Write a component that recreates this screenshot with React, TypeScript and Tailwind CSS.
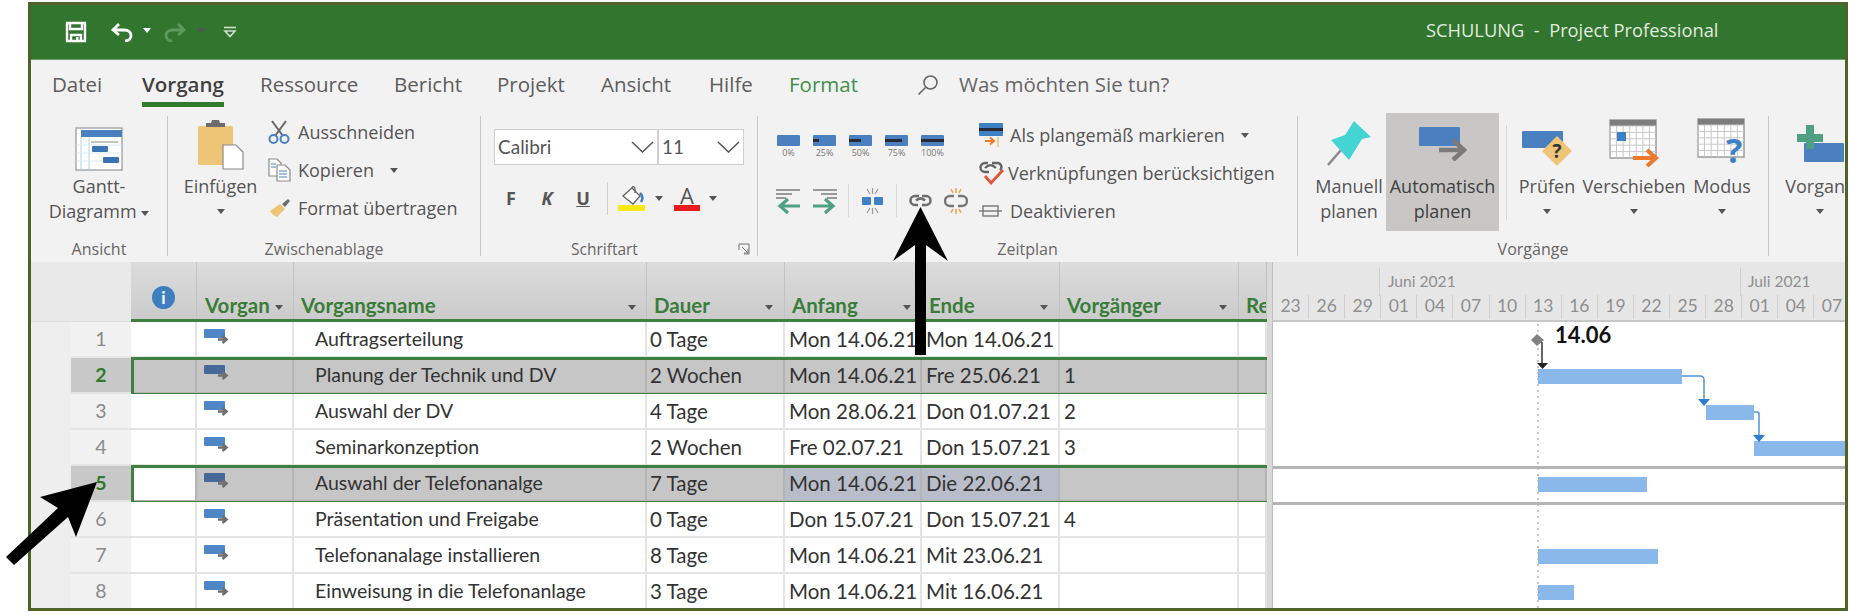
const Caret = ({ className = "" }: { className?: string }) => (
  <span className={`inline-block w-0 h-0 border-l-[4px] border-r-[4px] border-t-[5px] border-l-transparent border-r-transparent border-t-[#555] ${className}`} />
);

const GridCal = ({ rows = 4, cols = 6 }: { rows?: number; cols?: number }) => (
  <>
    <rect x="1" y="1" width="46" height="38" fill="#fff" stroke="#9a9a9a" strokeWidth="1.5" />
    <rect x="1" y="1" width="46" height="6" fill="#7d7d7d" />
    {Array.from({ length: cols }).map((_, i) => (
      <line key={`c${i}`} x1={1 + (i * 46) / cols} y1="7" x2={1 + (i * 46) / cols} y2="39" stroke="#c8c8c8" />
    ))}
    {Array.from({ length: rows }).map((_, i) => (
      <line key={`r${i}`} x1="1" y1={7 + (i * 32) / rows} x2="47" y2={7 + (i * 32) / rows} stroke="#c8c8c8" />
    ))}
  </>
);

const RowIcon = ({ dark }: { dark?: boolean }) => (
  <svg width="25" height="17" viewBox="0 0 25 17">
    <rect x="0" y="0" width="21" height="9" rx="1" fill={dark ? "#46699a" : "#4f86c6"} />
    <path d="M14 10.500H21M18.500 7L22.500 10.500L18.500 14" fill="none" stroke="#6f6f6f" strokeWidth="2.600" />
  </svg>
);

const Link = ({ color = "#6d6d6d" }: { color?: string }) => (
  <svg width="25" height="13" viewBox="0 0 25 13" fill="none" stroke={color} strokeWidth="2.600">
    <path d="M11 2H7a4.500 4.500 0 0 0 0 9h3" />
    <path d="M14 2h4a4.500 4.500 0 0 1 0 9h-4" />
    <path d="M8 6.500C11 3.500 14 3.500 17 6.500" />
  </svg>
);

const Percent = ({ fill, label }: { fill: number; label: string }) => (
  <div className="flex flex-col items-center w-[23px]">
    <div className="w-[23px] h-[11px] bg-[#4a80bf] rounded-[1px] flex items-center">
      {fill > 0 && <div className="h-[3px] bg-[#2a2a35]" style={{ width: `${fill}%` }} />}
    </div>
    <span className="text-[9px] leading-[12px] mt-[1px] text-[#777] whitespace-nowrap">{label}</span>
  </div>
);

const LargeButton = ({ icon, lines, caret, className = "" }: { icon: React.ReactNode; lines: string[]; caret?: boolean; className?: string }) => (
  <div className={`flex flex-col items-center shrink-0 ${className}`}>
    <div className="h-[55px] flex items-center justify-center">{icon}</div>
    <div className="mt-[3px] text-center leading-[25px] whitespace-nowrap">
      {lines.map((l) => (
        <div key={l}>{l}</div>
      ))}
      {caret && <div className="h-[25px] flex items-center justify-center"><Caret /></div>}
    </div>
  </div>
);

const SmallButton = ({ icon, label, caret, slot = "w-[30px]" }: { icon: React.ReactNode; label: string; caret?: boolean; slot?: string }) => (
  <div className="h-[30px] flex items-center whitespace-nowrap">
    <div className={`${slot} shrink-0 flex items-center`}>{icon}</div>
    <span>{label}</span>
    {caret && <Caret className="ml-[16px]" />}
  </div>
);

const Group = ({ label, width, children, labelRow }: { label: string; width: string; children: React.ReactNode; labelRow?: React.ReactNode }) => (
  <div className={`${width} h-[140px] shrink-0 border-r-[1px] border-[#c6c6c6] flex flex-col`}>
    <div className="flex-1 min-h-0">{children}</div>
    {labelRow ?? <div className="h-[14px] leading-[14px] text-center text-[16px] text-[#666]">{label}</div>}
  </div>
);

const TABS = [
  { label: "Datei", w: "w-[90px]" },
  { label: "Vorgang", w: "w-[118px]", active: true },
  { label: "Ressource", w: "w-[134px]" },
  { label: "Bericht", w: "w-[103px]" },
  { label: "Projekt", w: "w-[104px]" },
  { label: "Ansicht", w: "w-[108px]" },
  { label: "Hilfe", w: "w-[80px]" },
  { label: "Format", w: "w-[128px]", green: true },
];

const COLS = ["w-[66px]", "w-[97px]", "w-[353px]", "w-[138px]", "w-[137px]", "w-[138px]", "w-[179px]", "w-[28px]"];

const HEAD = [
  { label: "", pl: "" },
  { label: "Vorgan", pl: "pl-[8px]", caret: "ml-[5px]" },
  { label: "Vorgangsname", pl: "pl-[7px]", caret: "ml-auto mr-[10px]" },
  { label: "Dauer", pl: "pl-[7px]", caret: "ml-auto mr-[11px]" },
  { label: "Anfang", pl: "pl-[7px]", caret: "ml-auto mr-[10px]" },
  { label: "Ende", pl: "pl-[7px]", caret: "ml-auto mr-[11px]" },
  { label: "Vorgänger", pl: "pl-[7px]", caret: "ml-auto mr-[11px]" },
  { label: "Re", pl: "pl-[7px]" },
];

const ROWS = [
  { n: 1, name: "Auftragserteilung", dauer: "0 Tage", anfang: "Mon 14.06.21", ende: "Mon 14.06.21", vor: "" },
  { n: 2, name: "Planung der Technik und DV", dauer: "2 Wochen", anfang: "Mon 14.06.21", ende: "Fre 25.06.21", vor: "1", sel: true },
  { n: 3, name: "Auswahl der DV", dauer: "4 Tage", anfang: "Mon 28.06.21", ende: "Don 01.07.21", vor: "2" },
  { n: 4, name: "Seminarkonzeption", dauer: "2 Wochen", anfang: "Fre 02.07.21", ende: "Don 15.07.21", vor: "3" },
  { n: 5, name: "Auswahl der Telefonanalge", dauer: "7 Tage", anfang: "Mon 14.06.21", ende: "Die 22.06.21", vor: "", sel: true, white: true },
  { n: 6, name: "Präsentation und Freigabe", dauer: "0 Tage", anfang: "Don 15.07.21", ende: "Don 15.07.21", vor: "4" },
  { n: 7, name: "Telefonanalage installieren", dauer: "8 Tage", anfang: "Mon 14.06.21", ende: "Mit 23.06.21", vor: "" },
  { n: 8, name: "Einweisung in die Telefonanlage", dauer: "3 Tage", anfang: "Mon 14.06.21", ende: "Mit 16.06.21", vor: "" },
];

const DAYS = ["23", "26", "29", "01", "04", "07", "10", "13", "16", "19", "22", "25", "28", "01", "04", "07"];

const BARS = [
  { n: 2, cls: "ml-[265px] w-[144px]" },
  { n: 3, cls: "ml-[433px] w-[48px]" },
  { n: 4, cls: "ml-[481px] w-[91px]" },
  { n: 5, cls: "ml-[265px] w-[109px]" },
  { n: 7, cls: "ml-[265px] w-[120px]" },
  { n: 8, cls: "ml-[265px] w-[36px]" },
];

const App = () => {
  return (
    <div className="relative w-[1849px] h-[616px] bg-white pl-[28px] pt-[2px] overflow-hidden font-['Open_Sans',sans-serif] text-[18px] text-[#555]">
      <div className="w-[1820px] h-[609px] border-[3px] border-[#4f6228] overflow-hidden bg-[#f3f2f2]">
        {/* title bar */}
        <div className="h-[55px] bg-[#31752f] border-b border-[#6fa06d] flex items-center relative">
          <svg className="ml-[34px] mt-[-1px]" width="22" height="22" viewBox="0 0 22 22" fill="none" stroke="#fff" strokeWidth="2.400">
            <path d="M2 2H20V20H2Z" />
            <path d="M5 2V8H17V2" />
            <path d="M6 20V14H16V20" />
            <rect x="11" y="16" width="2.500" height="4" fill="#fff" stroke="none" />
          </svg>
          <svg className="ml-[23px]" width="24" height="20" viewBox="0 0 24 20" fill="none" stroke="#fff" strokeWidth="2.800">
            <path d="M9 2L3 8L9 13" />
            <path d="M3 8H14C19 8 21 11 21 13.500S19 19 15 19" />
          </svg>
          <Caret className="ml-[9px] mb-[3px] border-t-white" />
          <svg className="ml-[12px]" width="24" height="20" viewBox="0 0 24 20" fill="none" stroke="#5f9a5d" strokeWidth="2.800">
            <path d="M15 2L21 8L15 13" />
            <path d="M21 8H10C5 8 3 11 3 13.500S5 19 9 19" />
          </svg>
          <Caret className="ml-[10px] mb-[3px] border-t-[#5f9a5d]" />
          <svg className="ml-[18px] mb-[1px]" width="14" height="12" viewBox="0 0 14 12" fill="none" stroke="#cfe0cd" strokeWidth="1.600">
            <path d="M1 1.500H13" />
            <path d="M2 5H12L7 10.500Z" />
          </svg>
          <span className="absolute left-[1395px] top-[12px] text-[#e2ebdf] text-[18.300px] leading-[26px] whitespace-pre">SCHULUNG  -  Project Professional</span>
        </div>

        {/* tabs */}
        <div className="h-[47px] flex items-start pl-[21px] text-[20.500px] text-[#5c5c5c]">
          {TABS.map((t) => (
            <div key={t.label} className={`${t.w} shrink-0`}>
              <div className="inline-block">
                <div className={`leading-[49px] ${t.active ? "text-[#3f3f3f] font-semibold border-b-[5px] border-[#2f7a2d] h-[47px] -mr-[1px]" : ""} ${t.green ? "text-[#3f8f48]" : ""}`}>{t.label}</div>
              </div>
            </div>
          ))}
          <svg className="mt-[14px] shrink-0" width="22" height="22" viewBox="0 0 22 22" fill="none" stroke="#666" strokeWidth="1.600">
            <circle cx="13.500" cy="8.500" r="6.500" />
            <path d="M8.500 13.500L1.500 20.500" />
          </svg>
          <span className="ml-[20px] leading-[49px] text-[#666] whitespace-nowrap">Was möchten Sie tun?</span>
        </div>

        {/* ribbon */}
        <div className="h-[155px] pt-[9px] flex overflow-hidden">
          <Group label="Ansicht" width="w-[137px]">
            <LargeButton
              className="w-full"
              lines={["Gantt-"]}
              icon={
                <svg width="48" height="44" viewBox="0 0 48 44" className="mt-[10px]">
                  <rect x="1" y="1" width="46" height="42" fill="#fff" stroke="#a8a8a8" strokeWidth="1.500" />
                  <rect x="6" y="3" width="41" height="7" fill="#4a80bf" />
                  <path d="M6 10V43M14 10V43" stroke="#b7cde6" />
                  <path d="M1 18H47M1 26H47M1 34H47" stroke="#dce6f0" />
                  <path d="M16 15H43" stroke="#8a8a8a" />
                  <rect x="17" y="19" width="16" height="6" rx="1" fill="#3b73b5" />
                  <rect x="28" y="30" width="16" height="6" rx="1" fill="#3b73b5" />
                </svg>
              }
            />
            <div className="text-center leading-[25px] whitespace-nowrap">Diagramm <Caret className="mb-[2px]" /></div>
          </Group>

          <Group label="Zwischenablage" width="w-[313px]">
            <div className="flex pl-[16px]">
              <LargeButton
                className="w-[73px]"
                lines={["Einfügen"]}
                caret
                icon={
                  <svg width="46" height="50" viewBox="0 0 46 50" className="mt-[2px]">
                    <rect x="0" y="6" width="35" height="39" rx="1.500" fill="#eec477" />
                    <path d="M8 7V3H13L14 0H21L22 3H27V7Z" fill="#6d6d6d" />
                    <path d="M25 25H38L45 32V49H25Z" fill="#fff" stroke="#8a8a8a" strokeWidth="1.200" />
                  </svg>
                }
              />
              <div className="ml-[11px] pt-[1px] flex flex-col gap-[8px]">
                <SmallButton
                  label="Ausschneiden"
                  icon={
                    <svg width="22" height="24" viewBox="0 0 22 24" fill="none">
                      <path d="M4 1L15 16M18 1L7 16" stroke="#666" strokeWidth="2" />
                      <circle cx="5.500" cy="19" r="4" stroke="#4a80bf" strokeWidth="2" />
                      <circle cx="16.500" cy="19" r="4" stroke="#4a80bf" strokeWidth="2" />
                    </svg>
                  }
                />
                <SmallButton
                  label="Kopieren"
                  caret
                  icon={
                    <svg width="23" height="24" viewBox="0 0 23 24" fill="#fff" stroke="#8a8a8a" strokeWidth="1.200">
                      <path d="M1 1H9L13 5V18H1Z" />
                      <path d="M9 7H17L22 12V23H9Z" />
                      <path d="M3 6H8M3 9H8M11 13H19M11 16H19M11 19H19" stroke="#4a80bf" />
                    </svg>
                  }
                />
                <SmallButton
                  label="Format übertragen"
                  icon={
                    <svg width="22" height="22" viewBox="0 0 22 22" className="ml-[1px]">
                      <path d="M1 14L11 7L16 12L8 20C5 19 3 17 1 14Z" fill="#eec477" />
                      <path d="M13 7L19 2L21 4L16 10Z" fill="#6d6d6d" />
                    </svg>
                  }
                />
              </div>
            </div>
          </Group>

          <Group
            label=""
            width="w-[277px]"
            labelRow={
              <div className="h-[14px] flex items-center pl-[90px] text-[15.500px] text-[#666]">
                <span className="leading-[14px]">Schriftart</span>
                <svg className="ml-auto mr-[7px]" width="12" height="12" viewBox="0 0 12 12" fill="none" stroke="#777" strokeWidth="1">
                  <path d="M1 7V1H11V11H6" />
                  <path d="M4 4L10 10M10 6V10H6" />
                </svg>
              </div>
            }
          >
            <div className="pl-[13px] pt-[13px]">
              <div className="w-[250px] h-[36px] bg-white border border-[#cfcfcf] flex text-[#555] font-['Lato',sans-serif] text-[19px]">
                <div className="w-[164px] border-r-2 border-[#cfcfcf] flex items-center pl-[3px]">
                  Calibri
                  <svg className="ml-auto mr-[3px]" width="23" height="12" viewBox="0 0 23 12" fill="none" stroke="#555" strokeWidth="1.500"><path d="M1 1L11.500 11L22 1" /></svg>
                </div>
                <div className="flex-1 flex items-center pl-[3px]">
                  11
                  <svg className="ml-auto mr-[3px]" width="23" height="12" viewBox="0 0 23 12" fill="none" stroke="#555" strokeWidth="1.500"><path d="M1 1L11.500 11L22 1" /></svg>
                </div>
              </div>
            </div>
            <div className="mt-[17px] pl-[12px] flex items-center h-[33px]">
              <span className="w-[36px] text-center font-bold text-[#555]">F</span>
              <span className="w-[36px] text-center font-bold italic text-[#555]">K</span>
              <span className="w-[36px] text-center font-bold underline text-[#555]">U</span>
              <div className="ml-[6px] w-[1px] h-[33px] bg-[#d0d0d0]" />
              <div className="ml-[10px] w-[27px] flex flex-col items-center">
                <svg width="24" height="19" viewBox="0 0 24 19">
                  <path d="M3 10L12 2L20 10L13 18Z" fill="#fff" stroke="#666" strokeWidth="1.300" />
                  <path d="M12 2C12 0 15 0 15 3V7" fill="none" stroke="#666" strokeWidth="1.300" />
                  <path d="M20 7C23 10 23 13 21 16" fill="none" stroke="#3d7ec4" strokeWidth="2.500" />
                </svg>
                <div className="w-[27px] h-[6px] bg-[#ffe81a]" />
              </div>
              <Caret className="ml-[10px]" />
              <div className="ml-[11px] w-[26px] flex flex-col items-center">
                <span className="text-[22px] leading-[19px] text-[#555]">A</span>
                <div className="w-[26px] h-[6px] bg-[#e81c1c]" />
              </div>
              <Caret className="ml-[9px]" />
            </div>
          </Group>

          <Group label="Zeitplan" width="w-[540px]">
            <div className="flex pl-[18px]">
              <div className="w-[203px] shrink-0">
                <div className="pt-[19px] pl-[1px] flex gap-[13px]">
                  <Percent fill={0} label="0%" />
                  <Percent fill={25} label="25%" />
                  <Percent fill={50} label="50%" />
                  <Percent fill={75} label="75%" />
                  <Percent fill={100} label="100%" />
                </div>
                <div className="mt-[25px] flex items-center h-[33px]">
                  <svg width="26" height="26" viewBox="0 0 26 26" fill="none">
                    <path d="M0 2H24M0 6H16M0 10H10" stroke="#999" strokeWidth="2" />
                    <path d="M24 18H5M12 11L4 18L12 25" stroke="#4fa083" strokeWidth="3.200" />
                  </svg>
                  <svg className="ml-[9px]" width="26" height="26" viewBox="0 0 26 26" fill="none">
                    <path d="M2 2H26M10 6H26M16 10H26" stroke="#999" strokeWidth="2" />
                    <path d="M2 18H21M14 11L22 18L14 25" stroke="#4fa083" strokeWidth="3.200" />
                  </svg>
                  <div className="ml-[11px] w-[1px] h-[33px] bg-[#d8d8d8]" />
                  <svg className="ml-[13px]" width="21" height="26" viewBox="0 0 21 26" fill="none">
                    <rect x="0" y="9" width="9" height="8" rx="1" fill="#3f7fc4" />
                    <rect x="12" y="9" width="9" height="8" rx="1" fill="#3f7fc4" />
                    <path d="M10.500 0V6M5 1L8 6M16 1L13 6M10.500 20V26M5 25L8 20M16 25L13 20" stroke="#999" strokeWidth="1.200" />
                  </svg>
                  <div className="ml-[13px] w-[1px] h-[33px] bg-[#d8d8d8]" />
                  <div className="ml-[11px] w-[25px] flex"><Link /></div>
                  <svg className="ml-[11px]" width="24" height="26" viewBox="0 0 24 26" fill="none">
                    <path d="M10 8H6a5 5 0 0 0 0 10h4M14 8h4a5 5 0 0 1 0 10h-4" stroke="#777" strokeWidth="2.400" />
                    <path d="M12 0V5M7 1L9 5M17 1L15 5M12 21V26M7 25L9 21M17 25L15 21" stroke="#eda04a" strokeWidth="1.500" />
                  </svg>
                </div>
              </div>
              <div className="pt-[4px] flex flex-col gap-[8px]">
                <SmallButton
                  slot="w-[31px]"
                  label="Als plangemäß markieren"
                  caret
                  icon={
                    <svg width="25" height="24" viewBox="0 0 25 24">
                      <rect x="0" y="0" width="24" height="13" rx="1" fill="#3f7fc4" />
                      <rect x="0" y="5" width="24" height="3" fill="#2a2a35" />
                      <path d="M6 18H14M11 14.500L15 18L11 21.500" fill="none" stroke="#ec7a2c" strokeWidth="2" />
                      <path d="M19 14V24" stroke="#eec477" strokeWidth="1.500" />
                    </svg>
                  }
                />
                <SmallButton
                  slot="w-[29px]"
                  label="Verknüpfungen berücksichtigen"
                  icon={
                    <svg width="25" height="24" viewBox="0 0 25 24" fill="none">
                      <path d="M9 2H6a4 4 0 0 0 0 9h4M13 2h5a4 4 0 0 1 3 7M6 7C10 3 13 3 17 7" stroke="#666" strokeWidth="2.400" />
                      <path d="M6 15L12 22L24 9" stroke="#e2553a" strokeWidth="2.800" />
                    </svg>
                  }
                />
                <SmallButton
                  slot="w-[31px]"
                  label="Deaktivieren"
                  icon={
                    <svg width="23" height="12" viewBox="0 0 23 12" fill="none" stroke="#777" strokeWidth="1.400">
                      <rect x="4" y="1" width="15" height="10" />
                      <path d="M0 6H23" />
                    </svg>
                  }
                />
              </div>
            </div>
          </Group>

          <Group label="Vorgänge" width="w-[471px]">
            <div className="flex pl-[14px]">
              <LargeButton
                className="w-[74px]"
                lines={["Manuell", "planen"]}
                icon={
                  <svg width="44" height="45" viewBox="0 0 44 45">
                    <path d="M1 44L14 29" stroke="#8a8a8a" strokeWidth="2.500" />
                    <path d="M27 0L44 16L35 18L22 39L4 19L18 14Z" fill="#45d4d4" />
                  </svg>
                }
              />
              <div className="w-[113px] h-[118px] -mt-[3px] bg-[#c8c7c6] text-[#3f3f3f] shrink-0">
                <LargeButton
                  className="pt-[3px]"
                  lines={["Automatisch", "planen"]}
                  icon={
                    <svg width="48" height="34" viewBox="0 0 48 34">
                      <rect x="0" y="0" width="41" height="19" rx="1" fill="#4a80bf" />
                      <path d="M20 23H44M34 13L45 23L34 33" fill="none" stroke="#7a7a7a" strokeWidth="4.500" />
                    </svg>
                  }
                />
              </div>
              <div className="ml-[7px] mt-[9px] w-[1px] h-[95px] bg-[#d8d8d8]" />
              <LargeButton
                className="w-[60px] ml-[10px]"
                lines={["Prüfen"]}
                caret
                icon={
                  <svg width="50" height="36" viewBox="0 0 50 36" className="mt-[10px]">
                    <rect x="0" y="0" width="41" height="17" rx="1" fill="#4a80bf" />
                    <path d="M35 5L50 20L35 35L20 20Z" fill="#eec477" />
                    <text x="35" y="27" textAnchor="middle" fontSize="19" fontWeight="700" fill="#333" fontFamily="Open Sans">?</text>
                  </svg>
                }
              />
              <LargeButton
                className="w-[102px] ml-[6px]"
                lines={["Verschieben"]}
                caret
                icon={
                  <svg width="50" height="50" viewBox="0 0 50 50">
                    <GridCal rows={5} cols={7} />
                    <rect x="8" y="13" width="9" height="9" fill="#3f7fc4" />
                    <path d="M24 39H46M38 31L47 39L38 47" fill="none" stroke="#ec7a2c" strokeWidth="4" />
                  </svg>
                }
              />
              <LargeButton
                className="w-[60px] ml-[7px]"
                lines={["Modus"]}
                caret
                icon={
                  <svg width="50" height="52" viewBox="0 0 50 52" className="overflow-visible">
                    <GridCal rows={5} cols={7} />
                    <text x="37" y="45" textAnchor="middle" fontSize="34" fontWeight="700" fill="#3f7fc4" fontFamily="Open Sans">?</text>
                  </svg>
                }
              />
            </div>
          </Group>

          <div className="flex-1 overflow-hidden pl-[15px]">
            <LargeButton
              className="w-[72px]"
              lines={["Vorgang"]}
              caret
              icon={
                <svg width="48" height="38" viewBox="0 0 48 38">
                  <rect x="8" y="18" width="40" height="19" rx="1" fill="#4a80bf" />
                  <path d="M10 0H18V9H27V17H18V24H10V17H1V9H10Z" fill="#4fa083" />
                </svg>
              }
            />
          </div>
        </div>

        {/* sheet */}
        <div className="h-[346px] flex font-['Lato',sans-serif] text-[19.500px] text-[#333] bg-[#eeeeee] overflow-hidden">
          <div className="w-[1236px] shrink-0">
            <div className="h-[60px] flex bg-[#e9e9e9]">
              <div className="w-[100px] shrink-0 border-b border-[#dcdcdc]" />
              <div className="flex-1 flex bg-gradient-to-b from-[#dcdcdc] to-[#cbcbcb] border-b-[3px] border-[#3f7f3f]">
                {HEAD.map((h, i) => (
                  <div key={h.label + i} className={`${COLS[i]} shrink-0 border-r border-[#c2c2c2] flex items-end pb-[2px] overflow-hidden ${h.pl}`}>
                    {i === 0 ? (
                      <div className="mx-auto mb-[8px] w-[23px] h-[23px] rounded-full bg-[#3f7fbf] text-white flex items-center justify-center font-bold text-[17px] leading-none">i</div>
                    ) : (
                      <>
                        <span className="text-[#3a7d3a] font-bold text-[20.500px] leading-[24px] whitespace-nowrap">{h.label}</span>
                        {h.caret && <Caret className={`${h.caret} mb-[7px] border-t-[#3a7d3a]`} />}
                      </>
                    )}
                  </div>
                ))}
              </div>
            </div>
            {ROWS.map((r) => (
              <div key={r.n} className="relative h-[36px] flex">
                <div className="w-[40px] shrink-0" />
                <div className={`w-[60px] shrink-0 flex items-center justify-center border-b-2 border-[#e4e4e4] ${r.sel ? "bg-[#c8c8c8] text-[#2f7a2d] font-bold" : "bg-[#f1f1f1] text-[#8a8a8a]"}`}>{r.n}</div>
                <div className={`flex-1 flex ${r.sel ? "bg-[#c6c6c6]" : "bg-white"}`}>
                  {[
                    { v: "", c: r.white ? "bg-white" : "" },
                    { v: "icon", c: "pl-[7px] items-start pt-[7px]" },
                    { v: r.name, c: "pl-[21px]" },
                    { v: r.dauer, c: "pl-[3px] text-[20.500px]" },
                    { v: r.anfang, c: `pl-[4px] text-[20.500px] ${r.white ? "bg-[#b9bdc9]" : ""}` },
                    { v: r.ende, c: `pl-[4px] text-[20.500px] ${r.white ? "bg-[#b9bdc9]" : ""}` },
                    { v: r.vor, c: "pl-[4px] text-[20.500px]" },
                    { v: "", c: "" },
                  ].map((cell, i) => (
                    <div key={i} className={`${COLS[i]} ${r.sel ? "border-[#b4b4b4]" : "border-[#e4e4e4]"} shrink-0 border-r-2 border-b-2 flex items-center whitespace-nowrap ${cell.c}`}>
                      {cell.v === "icon" ? <RowIcon dark={r.sel} /> : cell.v}
                    </div>
                  ))}
                </div>
                {r.sel && <div className="absolute left-[100px] right-0 -top-[1px] -bottom-[2px] border-[3px] border-r-0 border-[#3f7f3f]" />}
              </div>
            ))}
          </div>

          <div className="w-[6px] shrink-0 bg-[#d9d9d9] border-r border-[#bdbdbd]" />

          <div className="w-[572px] shrink-0">
            <div className="h-[60px] bg-[#e6e6e6] border-b-2 border-[#c8c8c8] text-[#8f8f8f]">
              <div className="h-[34px] flex text-[15.600px] pt-[6px]">
                <div className="w-[107px] border-r border-[#cfcfcf]" />
                <div className="w-[361px] border-r border-[#cfcfcf] pl-[8px] leading-[26px]">Juni 2021</div>
                <div className="pl-[7px] leading-[26px]">Juli 2021</div>
              </div>
              <div className="h-[24px] flex text-[17.500px] -mt-[1px]">
                {DAYS.map((d, i) => (
                  <div key={i} className="w-[36.100px] shrink-0 border-r border-[#cfcfcf] text-center leading-[22px]">{d}</div>
                ))}
              </div>
            </div>
            <div className="relative bg-white h-[286px]">
              {Array.from({ length: 8 }).map((_, i) => {
                const bar = BARS.find((b) => b.n === i + 1);
                return (
                  <div key={i} className={`h-[36px] flex items-center ${i === 4 || i === 5 ? "shadow-[inset_0_3px_0_#b4b4b4]" : ""}`}>
                    {bar && <div className={`${bar.cls} h-[15px] bg-[#8ab8ea]`} />}
                    {i === 0 && <span className="ml-[282px] -mt-[10px] text-[22px] font-bold text-[#111] leading-none">14.06</span>}
                  </div>
                );
              })}
              <svg className="absolute inset-0" width="572" height="286" fill="none">
                <path d="M265 2V286" stroke="#b5b5b5" strokeWidth="1.500" strokeDasharray="2 4" />
                <path d="M264 12L271 18L264 24L258 18Z" fill="#808080" />
                <path d="M269 20V44" stroke="#333" strokeWidth="1.500" />
                <path d="M264 41H275L269.500 47Z" fill="#222" />
                <path d="M409 54H427Q431 54 431 58V78" stroke="#4f94df" strokeWidth="1.500" />
                <path d="M425 77H437L431 84Z" fill="#2e7cd6" />
                <path d="M481 90H484Q486 90 486 92V114" stroke="#4f94df" strokeWidth="1.500" />
                <path d="M480 113H492L486 120Z" fill="#2e7cd6" />
              </svg>
            </div>
          </div>
        </div>
      </div>

      {/* annotation arrows */}
      <svg className="absolute left-[893px] top-[207px]" width="56" height="148" viewBox="0 0 56 148">
        <path d="M27.500 0L55 54L33 38V148H22V38L0 54Z" fill="#000" />
      </svg>
      <svg className="absolute left-0 top-[475px]" width="100" height="95" viewBox="0 0 100 95">
        <path d="M97 7L76 62L68 42L14 90L6 82L58 33L40 22Z" fill="#000" />
      </svg>
    </div>
  );
};

export default App;
